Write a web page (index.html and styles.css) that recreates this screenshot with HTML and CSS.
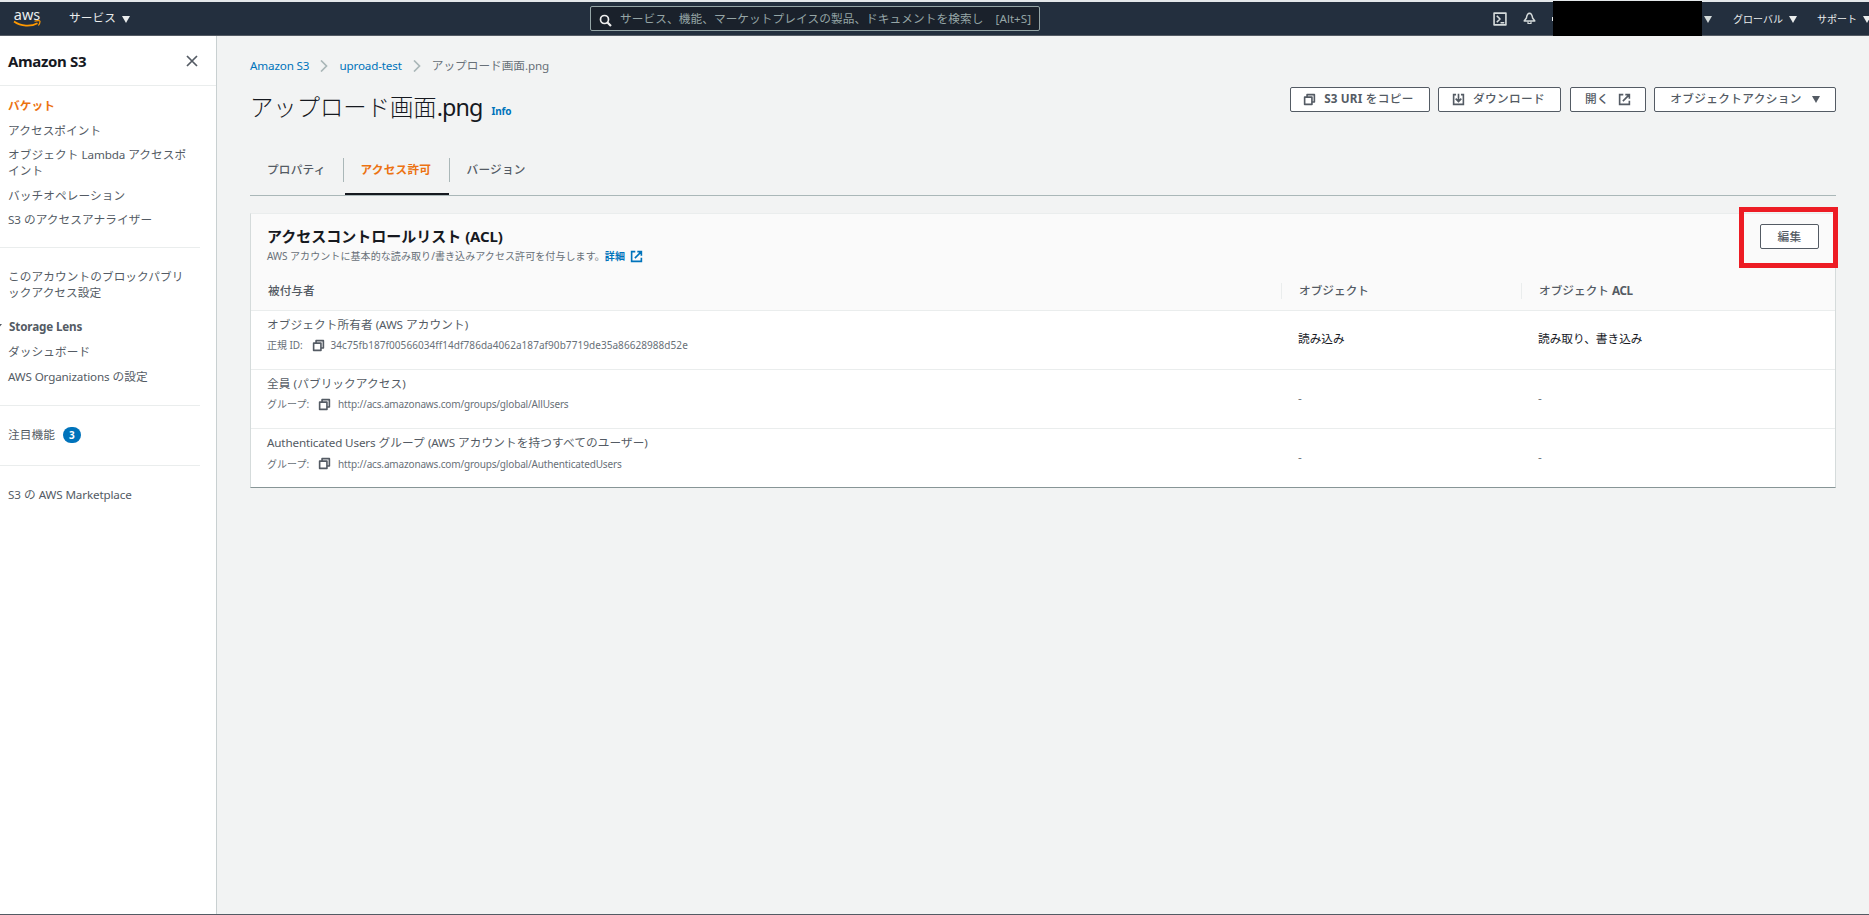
FILE: index.html
```html
<!DOCTYPE html>
<html lang="ja">
<head>
  <meta charset="UTF-8" />
  <meta name="viewport" content="width=device-width, initial-scale=1.0"/>
  <title>アップロード画面.png - Amazon S3</title>
  <link rel="stylesheet" href="styles.css">
</head>
<body>
  <svg width="0" height="0" class="sprite">
    <symbol id="copy" viewBox="0 0 16 16">
      <path d="M2 5h9v9H2z M5 5V2h9v9h-3" fill="none" stroke="currentColor" stroke-width="2" stroke-linejoin="round"/>
    </symbol>
    <symbol id="external" viewBox="0 0 16 16">
      <path d="M6.500 2H2v12h12V9.500M9 2H14v5M14 2L6 10" fill="none" stroke="currentColor" stroke-width="2"/>
    </symbol>
    <symbol id="download" viewBox="0 0 16 16">
      <path d="M5 2H2v12h12V2h-3M8 1v9M4.500 7L8 10.500 11.500 7" fill="none" stroke="currentColor" stroke-width="2"/>
    </symbol>
  </svg>

  <header class="topbar">
    <a class="logo" href="#">
      <span>aws</span>
      <svg width="28" height="8" viewBox="0 0 28 8">
        <path d="M1 1.500C8 6.500 18 6.800 24.500 3.200" fill="none" stroke="#f90" stroke-width="1.700"/>
        <path d="M21.500 1.200C24 .3 27 .5 27 1.200c.1 1.200-.6 3-1.600 4.300" fill="none" stroke="#f90" stroke-width="1.200"/>
      </svg>
    </a>
    <a class="services" href="#">サービス<i class="caret"></i></a>
    <div class="search">
      <svg width="13" height="13" viewBox="0 0 13 13">
        <circle cx="5.500" cy="5.500" r="4" fill="none" stroke="#eee" stroke-width="1.700"/>
        <path d="M8.500 8.500L12 12" stroke="#eee" stroke-width="2.200"/>
      </svg>
      <span class="placeholder">サービス、機能、マーケットプレイスの製品、ドキュメントを検索します</span>
      <span class="shortcut">[Alt+S]</span>
    </div>
    <div class="tools">
      <svg class="shell" width="14" height="14" viewBox="0 0 13 13">
        <path d="M1 1h11v11H1z M3.500 3.500L6.500 6.500 3.500 9.500M7 10h3.500" fill="none" stroke="#d5dbdb" stroke-width="1.500" stroke-linejoin="round"/>
      </svg>
      <svg class="bell" width="13" height="13" viewBox="0 0 13 13">
        <path d="M6.500 1.200C4 1.200 3.800 4 3.400 6L1.200 9h10.600L9.600 6C9.200 4 9 1.200 6.500 1.200z" fill="none" stroke="#d5dbdb" stroke-width="1.500" stroke-linejoin="round"/>
        <path d="M5 9.500v2h3v-2" fill="none" stroke="#d5dbdb" stroke-width="1.200"/>
      </svg>
      <i class="tick"></i>
      <div class="account"></div>
      <i class="caret"></i>
      <a class="region" href="#">グローバル<i class="caret"></i></a>
      <a class="support" href="#">サポート<i class="caret"></i></a>
    </div>
  </header>

  <div class="layout">
    <nav class="sidebar">
      <div class="sidebar-title">
        <h2>Amazon S3</h2>
        <svg width="12" height="12" viewBox="0 0 12 12">
          <path d="M1 1l10 10M11 1L1 11" stroke="#545b64" stroke-width="1.700"/>
        </svg>
      </div>
      <ul>
        <li class="active">バケット</li>
        <li>アクセスポイント</li>
        <li>オブジェクト <span class="en">Lambda</span> アクセスポイント</li>
        <li>バッチオペレーション</li>
        <li><span class="en">S3</span> のアクセスアナライザー</li>
      </ul>
      <ul class="storage">
        <li class="block-access">このアカウントのブロックパブリックアクセス設定</li>
        <li class="section"><i class="section-arrow"></i><span class="en">Storage Lens</span></li>
        <li>ダッシュボード</li>
        <li><span class="en">AWS Organizations</span> の設定</li>
      </ul>
      <ul class="single">
        <li>注目機能<span class="badge">3</span></li>
      </ul>
      <ul class="single">
        <li><span class="en">S3</span> の <span class="en">AWS Marketplace</span></li>
      </ul>
    </nav>

    <main class="main">
      <div class="breadcrumb">
        <a href="#" class="en">Amazon S3</a>
        <svg width="8" height="12" viewBox="0 0 8 12"><path d="M1 .5l5.500 5.500L1 11.500" fill="none" stroke="#aab7b8" stroke-width="1.700"/></svg>
        <a href="#" class="en">uproad-test</a>
        <svg width="8" height="12" viewBox="0 0 8 12"><path d="M1 .5l5.500 5.500L1 11.500" fill="none" stroke="#aab7b8" stroke-width="1.700"/></svg>
        <span>アップロード画面<span class="en">.png</span></span>
      </div>

      <div class="page-header">
        <h1>アップロード画面<span class="en">.png</span></h1>
        <a href="#" class="info">Info</a>
        <div class="actions">
          <button class="btn copy-uri"><svg class="icon"><use href="#copy"/></svg><span><span class="en">S3 URI</span> をコピー</span></button>
          <button class="btn download"><svg class="icon"><use href="#download"/></svg>ダウンロード</button>
          <button class="btn open">開く<svg class="icon"><use href="#external"/></svg></button>
          <button class="btn object-actions">オブジェクトアクション<i class="caret"></i></button>
        </div>
      </div>

      <div class="tabs">
        <div class="tab">プロパティ</div>
        <div class="tab selected">アクセス許可</div>
        <div class="tab">バージョン</div>
      </div>

      <section class="card">
        <div class="card-header">
          <div>
            <h2>アクセスコントロールリスト <span class="en">(ACL)</span></h2>
            <p><span class="en">AWS</span> アカウントに基本的な読み取り/書き込みアクセス許可を付与します。<a href="#">詳細<svg class="icon"><use href="#external"/></svg></a></p>
          </div>
          <div class="edit">
            <button class="btn">編集</button>
            <div class="highlight"></div>
          </div>
        </div>
        <table>
          <thead>
            <tr>
              <th class="grantee">被付与者</th>
              <th class="objects"><span>オブジェクト</span></th>
              <th><span>オブジェクト <span class="en">ACL</span></span></th>
            </tr>
          </thead>
          <tbody>
            <tr>
              <td>
                <div class="name">オブジェクト所有者 <span class="en">(AWS</span> アカウント)</div>
                <div class="sub"><span>正規 <span class="en">ID:</span></span><svg class="icon"><use href="#copy"/></svg><span class="hash">34c75fb187f00566034ff14df786da4062a187af90b7719de35a86628988d52e</span></div>
              </td>
              <td>読み込み</td>
              <td>読み取り、書き込み</td>
            </tr>
            <tr>
              <td>
                <div class="name">全員 (パブリックアクセス)</div>
                <div class="sub"><span>グループ:</span><svg class="icon"><use href="#copy"/></svg><span class="url">http://acs.amazonaws.com/groups/global/AllUsers</span></div>
              </td>
              <td class="none">-</td>
              <td class="none">-</td>
            </tr>
            <tr>
              <td>
                <div class="name"><span class="en">Authenticated Users</span> グループ <span class="en">(AWS</span> アカウントを持つすべてのユーザー)</div>
                <div class="sub"><span>グループ:</span><svg class="icon"><use href="#copy"/></svg><span class="url">http://acs.amazonaws.com/groups/global/AuthenticatedUsers</span></div>
              </td>
              <td class="none">-</td>
              <td class="none">-</td>
            </tr>
          </tbody>
        </table>
      </section>
    </main>
  </div>
</body>
</html>
```
FILE: styles.css
```css
* {
  box-sizing: border-box;
}
body {
  display: flex;
  flex-direction: column;
  height: 915px;
  margin: 0;
  overflow: hidden;
  font-family: "Noto Sans", "Noto Sans CJK JP", sans-serif;
  font-size: 11.67px;
  line-height: 16px;
  color: #545b64;
  background: #f2f3f3;
  border-bottom: 1px solid #545b64;
}
a {
  color: #0073bb;
  text-decoration: none;
}
h1, h2, p, ul {
  margin: 0;
  padding: 0;
}
ul {
  list-style: none;
}
.sprite {
  position: absolute;
}
.en {
  letter-spacing: -0.15px;
}
.icon {
  width: 13px;
  height: 13px;
  flex: none;
}
.caret {
  display: inline-block;
  border: 4px solid transparent;
  border-top: 7px solid currentColor;
  border-bottom: 0;
}

/* top bar */
.topbar {
  display: flex;
  align-items: center;
  flex: none;
  height: 36px;
  background: #232f3e;
  border-top: 2px solid #e4e8ea;
  border-bottom: 1px solid #545b64;
  padding-left: 13px;
  color: #d5dbdb;
}
.topbar a {
  color: #eaeded;
}
.logo {
  display: flex;
  flex-direction: column;
  flex: none;
  width: 28px;
  margin-right: 28px;
}
.logo span {
  font-size: 14.5px;
  line-height: 12px;
  height: 12px;
  text-align: center;
  margin-top: -2px;
}
.services {
  display: flex;
  align-items: center;
  flex: none;
  width: 521px;
  margin-top: -2px;
  letter-spacing: 0.1px;
}
.services .caret {
  margin: 3px 0 0 6px;
}
.search {
  display: flex;
  align-items: center;
  flex: none;
  width: 450px;
  height: 25px;
  padding: 0 8px;
  background: #1a212b;
  border: 1px solid #95a5a6;
  border-radius: 2px;
  color: #95a5a6;
}
.search svg {
  margin-top: 3px;
}
.placeholder {
  width: 364px;
  margin-left: 8px;
  overflow: hidden;
  white-space: nowrap;
  letter-spacing: 0.08px;
}
.shortcut {
  margin-left: auto;
}
.tools {
  display: flex;
  align-items: center;
  flex: 1;
  min-width: 0;
  margin-left: 453px;
  font-size: 10px;
  white-space: nowrap;
}
.tools .caret {
  flex: none;
  margin-top: 1px;
}
.tools svg {
  flex: none;
}
.bell {
  margin-left: 16px;
}
.tick {
  flex: none;
  width: 1px;
  height: 4px;
  margin-left: 16px;
  background: #eaeded;
}
.account {
  flex: none;
  width: 149px;
  height: 35px;
  margin: -1px 2px -1px 0;
  background: #000;
}
.region, .support {
  display: flex;
  align-items: center;
  flex: none;
}
.region {
  margin-left: 21px;
}
.support {
  margin-left: 20px;
}
.region .caret, .support .caret {
  margin-left: 6px;
}

.layout {
  display: flex;
  flex: 1;
}

/* sidebar */
.sidebar {
  width: 217px;
  flex: none;
  background: #fff;
  border-right: 1px solid #c9d0d1;
}
.sidebar-title {
  display: flex;
  align-items: center;
  justify-content: space-between;
  height: 50px;
  padding: 0 18px 0 8px;
  border-bottom: 1px solid #eaeded;
}
.sidebar h2 {
  font-size: 15px;
  line-height: 20px;
  color: #16191f;
  letter-spacing: -0.35px;
}
.sidebar ul {
  width: 200px;
  padding: 12px 12px 10px 8px;
  border-bottom: 1px solid #eaeded;
  letter-spacing: 0.08px;
}
.sidebar li {
  margin-bottom: 8.5px;
}
.sidebar ul:last-child {
  border-bottom: 0;
}
.sidebar .active {
  color: #ec7211;
  font-weight: bold;
}
.sidebar ul.storage {
  padding: 21px 14px 12px 8px;
}
.sidebar .block-access {
  margin-bottom: 18px;
}
.sidebar .section {
  display: flex;
  align-items: center;
  margin-bottom: 9.5px;
  font-weight: bold;
}
.section-arrow {
  margin-left: -14px;
  margin-right: 7px;
  border: 4px solid transparent;
  border-top: 5px solid currentColor;
  border-bottom: 0;
}
.sidebar ul.single {
  padding: 21px 14px 13px 8px;
}
.badge {
  display: inline-block;
  width: 18px;
  height: 16px;
  margin-left: 8px;
  border-radius: 8px;
  background: #0073bb;
  color: #fff;
  font-size: 10px;
  font-weight: bold;
  text-align: center;
}

/* main */
.main {
  flex: 1;
  padding: 22px 33px 0 33px;
}
.breadcrumb {
  display: flex;
  align-items: center;
  height: 16px;
  color: #687078;
}
.breadcrumb svg {
  margin: 0 11px 0 11px;
}
.page-header {
  display: flex;
  align-items: center;
  height: 32px;
  margin-top: 17px;
}
h1 {
  font-size: 23.33px;
  font-weight: 300;
  line-height: 30px;
  color: #16191f;
}
h1 .en {
  font-weight: 400;
  letter-spacing: -0.9px;
}
.info {
  margin: 8px 0 0 9px;
  font-size: 10px;
  font-weight: bold;
  letter-spacing: -0.1px;
}
.actions {
  display: flex;
  gap: 8px;
  margin: -16px 0 0 auto;
}
.btn {
  display: flex;
  align-items: center;
  justify-content: center;
  height: 25px;
  padding: 0;
  font: 500 11.67px/16px "Noto Sans", "Noto Sans CJK JP", sans-serif;
  letter-spacing: 0.35px;
  color: #545b64;
  background: #fff;
  border: 1px solid #545b64;
  border-radius: 2px;
  white-space: nowrap;
}
.btn .en {
  font-weight: bold;
  letter-spacing: 0.2px;
}
.copy-uri {
  width: 140px;
  padding-right: 3px;
}
.download {
  width: 123px;
  margin-right: 1px;
  padding-right: 2px;
}
.copy-uri .icon, .download .icon {
  margin-right: 8px;
}
.open {
  width: 76px;
}
.open .icon {
  margin-left: 9px;
}
.object-actions {
  width: 182px;
}
.object-actions .caret {
  margin-left: 10px;
}

.tabs {
  display: flex;
  height: 47px;
  margin-top: 26px;
  border-bottom: 1px solid #aab7b8;
  font-weight: 500;
}
.tab {
  position: relative;
  height: 46px;
  padding: 13px 17px 0 18px;
  letter-spacing: 0.2px;
  white-space: nowrap;
}
.tab:first-child {
  padding-left: 17px;
}
.tab + .tab::before {
  content: "";
  position: absolute;
  left: 0;
  top: 9px;
  width: 1px;
  height: 24px;
  background: #aab7b8;
}
.tab.selected {
  width: 106px;
  padding: 13px 0 0 18px;
  color: #ec7211;
  font-weight: bold;
}
.tab.selected::after {
  content: "";
  position: absolute;
  left: 2px;
  right: 0;
  bottom: 0;
  height: 2px;
  background: #16191f;
}

/* ACL card */
.card {
  margin-top: 17px;
  background: #fff;
  border: 1px solid #d5dbdb;
  border-top-color: #eaeded;
  border-bottom: 1px solid #879596;
}
.card-header {
  display: flex;
  justify-content: space-between;
  height: 60px;
  padding: 10px 16px 0 16px;
  background: #fafafa;
}
.card-header h2 {
  font-size: 15px;
  line-height: 24px;
  color: #16191f;
}
.card-header p {
  display: flex;
  align-items: center;
  font-size: 10px;
  letter-spacing: 0.08px;
  color: #687078;
  white-space: pre;
}
.card-header p a {
  display: flex;
  align-items: center;
  font-weight: bold;
}
.card-header p .icon {
  margin-left: 5px;
}
.edit {
  position: relative;
}
.edit .btn {
  width: 59px;
}
.highlight {
  position: absolute;
  left: -21px;
  top: -17px;
  width: 99px;
  height: 61px;
  border: 5px solid #ed1c24;
}
table {
  width: 100%;
  border-collapse: collapse;
  table-layout: fixed;
}
th {
  height: 36px;
  padding: 0 0 2px 17px;
  text-align: left;
  font-weight: 500;
  background: #fafafa;
  border-bottom: 1px solid #eaeded;
}
th .en {
  font-weight: bold;
  letter-spacing: -0.4px;
}
th.grantee {
  width: 1030px;
}
th.objects {
  width: 240px;
}
th + th {
  padding-left: 0;
}
th + th > span {
  display: block;
  padding-left: 17px;
  border-left: 1px solid #eaeded;
}
td {
  height: 59px;
  padding: 0 0 2px 17px;
  color: #16191f;
  border-bottom: 1px solid #eaeded;
}
td:first-child {
  padding: 0 0 9px 16px;
}
tr:last-child td {
  border-bottom: 0;
}
td.none {
  color: #687078;
}
.name {
  color: #545b64;
  letter-spacing: 0.08px;
}
.sub {
  display: flex;
  align-items: center;
  margin-top: 4.500px;
  font-size: 10px;
  color: #687078;
}
.sub .icon {
  margin: 0 6px 0 9px;
  color: #545b64;
}
.url {
  margin-left: 1px;
  letter-spacing: -0.16px;
}
.hash {
  letter-spacing: 0.06px;
}
```
